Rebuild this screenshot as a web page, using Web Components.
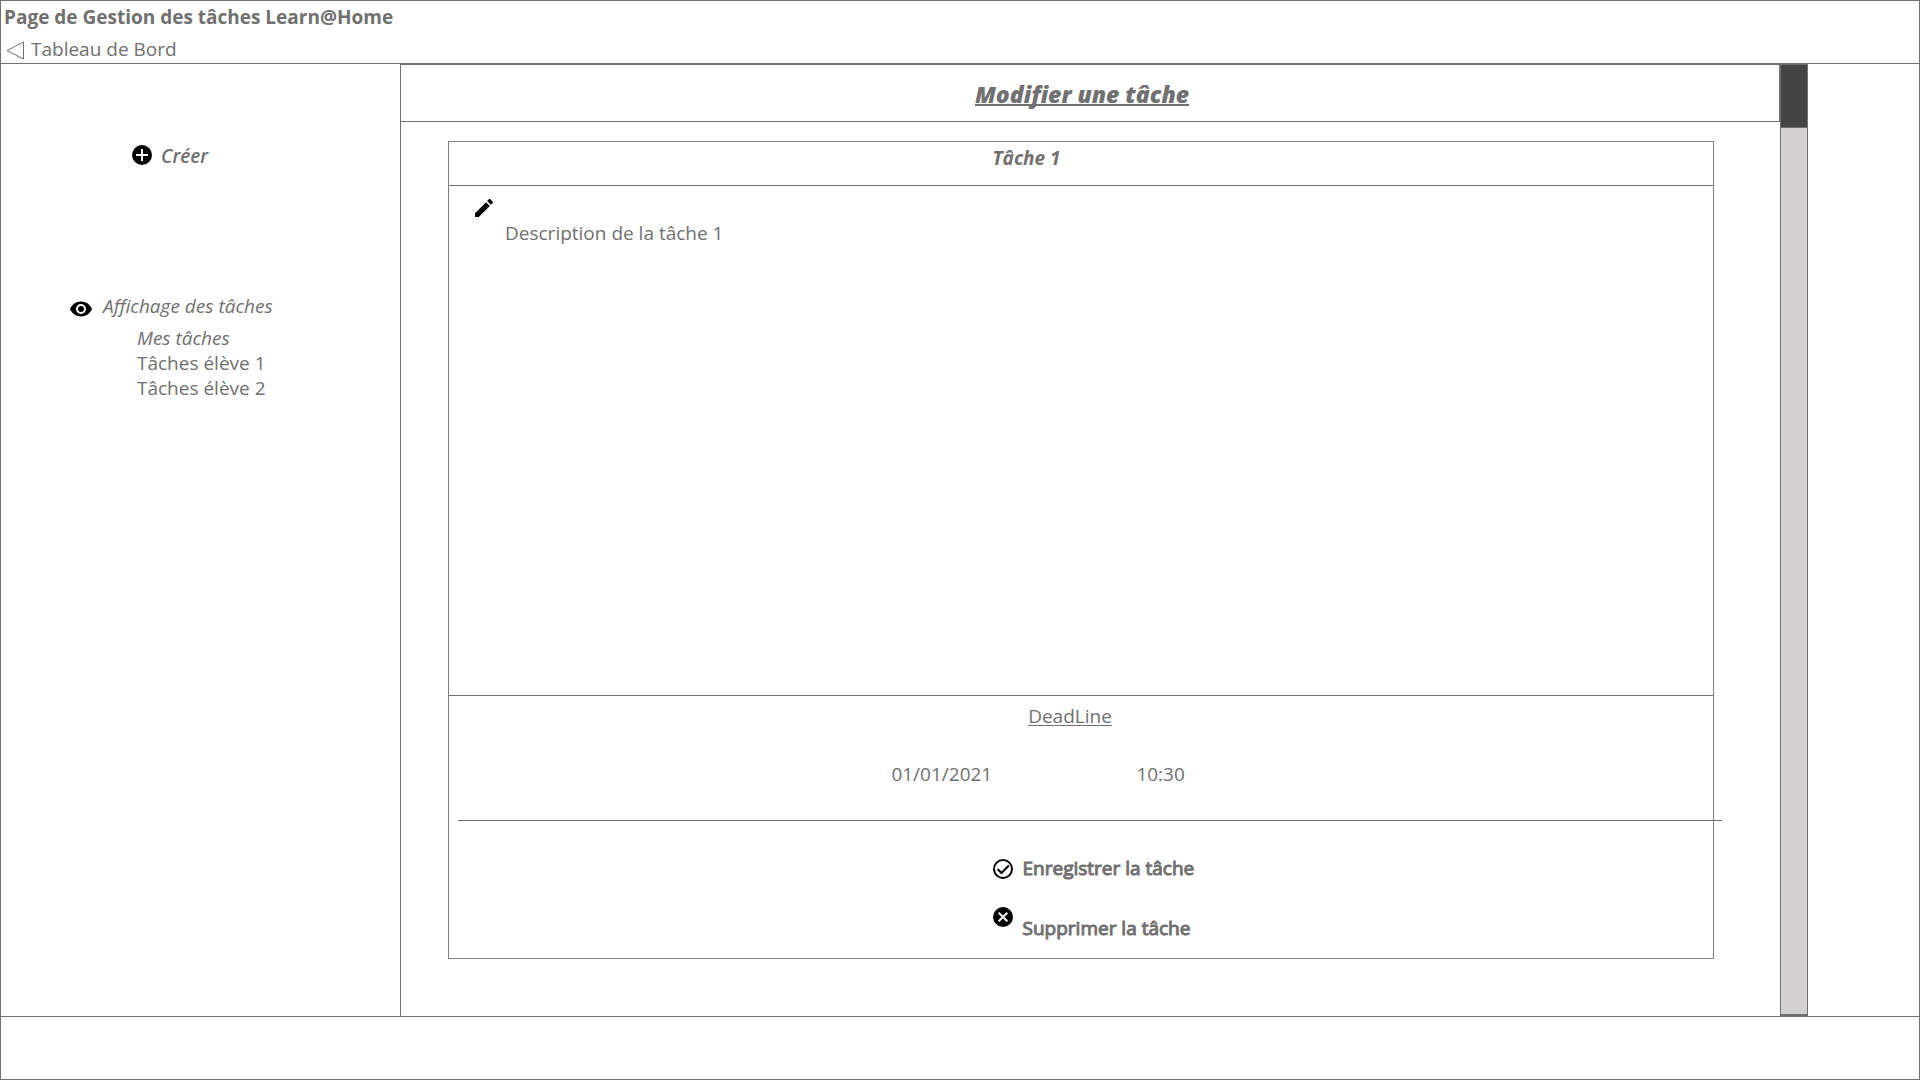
<!DOCTYPE html>
<html lang="fr">
<head>
<meta charset="utf-8">
<title>Gestion des tâches Learn@Home</title>
<style>
  body {
    margin: 0;
    --ink: #707070;
    --line: 1px solid #707070;
    font: 19px/27px "Open Sans", "Noto Sans", sans-serif;
    color: #707070;
    background: #fff;
  }
</style>
</head>
<body>
<task-page></task-page>

<script>
const base = `
  *, *::before, *::after { box-sizing: border-box; }
  h1, h2, h3, p, ul { margin: 0; padding: 0; font: inherit; }
  a { color: inherit; text-decoration: none; }
  button, input, textarea {
    font: inherit; color: inherit; background: none; border: 0; margin: 0; padding: 0; border-radius: 0;
  }
  button { cursor: pointer; }
  svg { display: block; flex: none; }
`;

function define(name, css, html) {
  customElements.define(name, class extends HTMLElement {
    constructor() {
      super();
      const template = document.createElement('template');
      template.innerHTML = `<style>${base}${css}</style>${html}`;
      this.attachShadow({ mode: 'open' }).append(template.content.cloneNode(true));
    }
  });
}

const icons = {
  add: [20, 20, '<circle cx="10" cy="10" r="10"/><path d="M10 4v12M4 10h12" stroke="#fff" stroke-width="2"/>'],
  eye: [22, 16, '<path d="M11 .5C6 .5 1.8 3.600 0 8c1.800 4.400 6 7.500 11 7.500S20.200 12.400 22 8C20.200 3.600 16 .5 11 .5z"/><circle cx="11" cy="8" r="4" fill="none" stroke="#fff" stroke-width="2"/>'],
  edit: [18, 18, '<path d="M0 14.250V18h3.750L14.810 6.940l-3.750-3.750L0 14.250zM17.710 4.040a1 1 0 0 0 0-1.410L15.370.290a1 1 0 0 0-1.410 0l-1.830 1.830 3.750 3.750 1.830-1.830z"/>'],
  check: [20, 20, '<circle cx="10" cy="10" r="9" fill="none" stroke="#000" stroke-width="2"/><path d="M4.500 10l4 4 7.300-7.500" fill="none" stroke="#000" stroke-width="2"/>'],
  remove: [20, 20, '<circle cx="10" cy="10" r="10"/><path d="M5.700 5.700l8.600 8.600M14.300 5.700l-8.600 8.600" stroke="#fff" stroke-width="2"/>'],
  back: [18, 20, '<path d="M1 10.500L17.500 2v17z" fill="none" stroke="#707070"/>']
};

customElements.define('task-icon', class extends HTMLElement {
  connectedCallback() {
    const [w, h, shape] = icons[this.getAttribute('name')];
    const root = this.shadowRoot || this.attachShadow({ mode: 'open' });
    root.innerHTML = `<style>:host { display: block; flex: none; } svg { display: block; }</style>
      <svg width="${w}" height="${h}" viewBox="0 0 ${w} ${h}" aria-hidden="true">${shape}</svg>`;
  }
});

define('page-header', `
  :host { display: flex; flex-direction: column; gap: 5px; height: 63px; padding: 3px 0 0 3px; border-bottom: var(--line); }
  h1 { font-weight: 700; }
  a { display: flex; align-items: center; gap: 7px; width: max-content; padding-left: 2px; }
`, `
  <h1>Page de Gestion des tâches Learn@Home</h1>
  <a href="#tableau"><task-icon name="back"></task-icon>Tableau de Bord</a>
`);

define('task-sidebar', `
  :host { display: flex; flex-direction: column; align-items: flex-start; width: 400px; flex: none; padding-top: 79px; border-right: var(--line); }
  button { display: flex; align-items: flex-start; gap: 9px; margin-left: 131px; font-weight: 600; font-style: italic; }
  button task-icon { padding-top: 2px; }
  nav { margin: 123px 0 0 69px; }
  h2 { display: flex; align-items: center; gap: 11px; font-style: italic; }
  h2 task-icon { padding-top: 4px; }
  ul { list-style: none; margin-top: 6px; padding-left: 67px; line-height: 25px; }
  [aria-current] { font-style: italic; }
`, `
  <button type="button"><task-icon name="add"></task-icon>Créer</button>
  <nav aria-labelledby="views">
    <h2 id="views"><task-icon name="eye"></task-icon>Affichage des tâches</h2>
    <ul>
      <li><a href="#moi" aria-current="page">Mes tâches</a></li>
      <li><a href="#eleve-1">Tâches élève 1</a></li>
      <li><a href="#eleve-2">Tâches élève 2</a></li>
    </ul>
  </nav>
`);

define('scroll-track', `
  :host { display: block; width: 28px; flex: none; background: #d2d0d1; border: var(--line); border-bottom-width: 2px; }
  div { height: 63px; background: #444; border-bottom: var(--line); }
`, `<div></div>`);

define('deadline-fields', `
  :host { display: block; padding: 7px 0 32px; }
  h3 { padding-right: 22px; text-align: center; text-decoration: underline; text-underline-offset: 2px; text-decoration-thickness: 1px; }
  div { display: flex; gap: 125px; margin-top: 31px; padding-left: 35%; }
  input { width: 120px; height: 27px; }
`, `
  <h3>DeadLine</h3>
  <div>
    <input type="text" aria-label="Date" value="01/01/2021">
    <input type="text" aria-label="Heure" value="10:30">
  </div>
`);

define('task-action', `
  :host { display: block; }
  button { display: flex; align-items: center; gap: 10px; -webkit-text-stroke: 1px var(--ink); }
  :host([drop]) button { align-items: flex-start; }
  :host([drop]) span { padding-top: 8px; }
`, `<button type="button"><slot name="icon"></slot><span><slot></slot></span></button>`);

define('task-editor', `
  :host { display: flex; flex-direction: column; flex: 1; border: 1px solid #808080; }
  h2 { padding: 3px 0 13px 43%; font-weight: 700; font-style: italic; border-bottom: var(--line); }
  .description { display: flex; flex-direction: column; flex: 1; gap: 3px; padding: 13px 26px 0; border-bottom: var(--line); }
  textarea { flex: 1; margin-left: 30px; resize: none; outline: 0; }
  hr { width: 100%; height: 1px; margin: 0 0 0 9px; border: 0; background: var(--ink); }
  .actions { display: flex; flex-direction: column; align-items: flex-start; gap: 25px; padding: 34px 0 16px 43%; }
`, `
  <h2>Tâche 1</h2>
  <div class="description">
    <task-icon name="edit"></task-icon>
    <textarea aria-label="Description">Description de la tâche 1</textarea>
  </div>
  <deadline-fields></deadline-fields>
  <hr>
  <div class="actions">
    <task-action><task-icon slot="icon" name="check"></task-icon>Enregistrer la tâche</task-action>
    <task-action drop><task-icon slot="icon" name="remove"></task-icon>Supprimer la tâche</task-action>
  </div>
`);

define('task-panel', `
  :host { display: flex; flex-direction: column; flex: 1; min-width: 0; }
  h2 { height: 58px; padding: 16px 16px 0 0; border: var(--line); border-left: 0; text-align: center; font-size: 23px; font-weight: 800; font-style: italic; text-decoration: underline; text-decoration-thickness: 2px; text-underline-offset: 1px; text-decoration-skip-ink: none; }
  section { display: flex; flex: 1; padding: 19px 66px 57px 47px; }
`, `
  <h2>Modifier une tâche</h2>
  <section><task-editor></task-editor></section>
`);

define('task-page', `
  :host { display: flex; flex-direction: column; min-height: 100vh; border: var(--line); box-sizing: border-box; }
  main { display: flex; flex: 1; padding-right: 111px; }
  footer { height: 63px; border-top: var(--line); }
`, `
  <page-header></page-header>
  <main>
    <task-sidebar></task-sidebar>
    <task-panel></task-panel>
    <scroll-track></scroll-track>
  </main>
  <footer></footer>
`);
</script>
</body>
</html>
